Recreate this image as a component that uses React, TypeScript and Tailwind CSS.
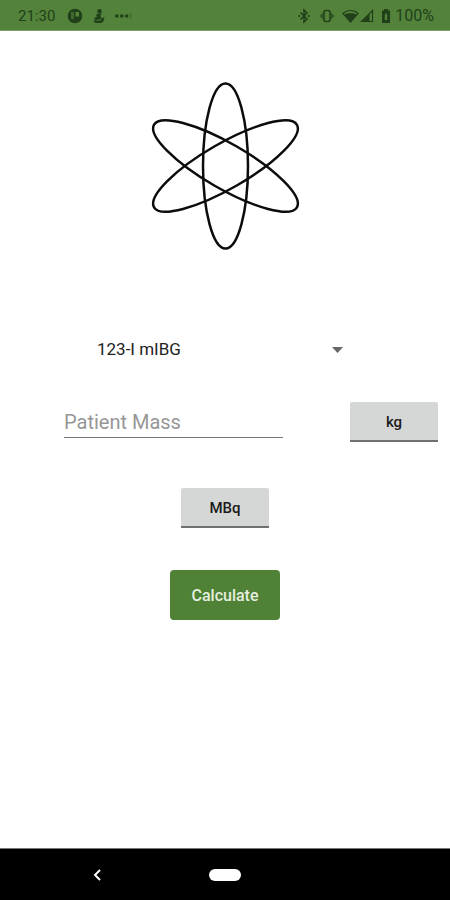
import { useState } from "react";

const TRACERS = ["123-I mIBG", "18F-FDG", "99mTc-MDP", "99mTc-DMSA", "99mTc-MAG3"];

function StatusBar() {
  return (
    <header className="flex h-[31px] items-center justify-between border-b border-[#7ba066] bg-[#53833b] pt-0.5 pr-4 pl-[18px] text-[#20401a]">
      <div className="flex items-center">
        <span className="text-[15px]">21:30</span>
        <svg className="ml-3" width="16" height="16" viewBox="0 0 16 16">
          <circle cx="8" cy="8" r="7.3" fill="currentColor" />
          <path d="M4 4h3v7H4z" fill="#53833b" opacity=".6" />
          <path d="M8.500 4h3.500v4.500H8.500z" fill="#53833b" />
        </svg>
        <svg className="ml-2" width="16" height="16" viewBox="0 0 16 16" fill="currentColor">
          <circle cx="8.5" cy="3.2" r="2.2" />
          <path d="M5 6.5 10.5 5 9.5 8l1 2.5 3-1.5-1 4.5L10 15H4.500L2 13l2.500-.8L3 10l3-1.200z" />
          <path d="M5.500 12.500 10 11.500" stroke="#53833b" strokeWidth="1" />
        </svg>
        <svg className="ml-[7px]" width="18" height="16" viewBox="0 0 18 16" fill="currentColor">
          <rect x="1" y="6.5" width="3.5" height="3" rx="1" />
          <rect x="6" y="6.5" width="3.5" height="3" rx="1" />
          <rect x="11" y="6.5" width="3.5" height="3" rx="1" />
          <path d="M16.5 5h1v6h-1z" opacity=".5" />
        </svg>
      </div>
      <div className="flex items-center">
        {/* bluetooth */}
        <svg width="12" height="16" viewBox="0 0 12 16" fill="none" stroke="currentColor" strokeWidth="1.5">
          <path d="M2.5 4.5 9 11l-3 3V2l3 3-6.5 6.5" />
          <path d="M.5 8H2M10 8h1.5" strokeWidth="1.8" />
        </svg>
        {/* vibrate */}
        <svg className="ml-[9px]" width="16" height="16" viewBox="0 0 16 16" fill="currentColor">
          <rect x="5" y="2.5" width="6" height="11" rx="2" fill="none" stroke="currentColor" strokeWidth="1.6" />
          <path d="M4 4.5v7L.5 8zM12 4.5v7L15.5 8z" opacity=".65" />
        </svg>
        {/* wifi */}
        <svg className="ml-[7px]" width="17" height="16" viewBox="0 0 17 16">
          <path d="M1 5.5C5 1.5 12 1.5 16 5.5L8.5 14z" fill="none" stroke="currentColor" strokeWidth="1.2" />
          <path d="M2.5 6.5c3-1.8 9-1.8 12 0l-6 7.5z" fill="currentColor" />
        </svg>
        {/* signal */}
        <svg className="ml-px" width="14" height="16" viewBox="0 0 14 16">
          <path d="M12.5 2.5v11h-11z" fill="none" stroke="currentColor" strokeWidth="1.2" />
          <path d="M9.5 5.5V14H1z" fill="currentColor" />
        </svg>
        {/* battery */}
        <svg className="ml-[7px]" width="10" height="16" viewBox="0 0 10 16">
          <path d="M3 1h4v1.5h2V15H1V2.5h2z" fill="currentColor" />
          <path d="M5 4.5 3.8 7.5V12h2.4V7.5z" fill="#53833b" />
        </svg>
        <span className="ml-1 text-base">100%</span>
      </div>
    </header>
  );
}

function AtomLogo() {
  return (
    <svg width="168" height="168" viewBox="0 0 168 168" fill="none" stroke="#0c0c0c" strokeWidth="2.5" role="img" aria-label="Atom">
      <ellipse cx="84.5" cy="84" rx="22.5" ry="82.5" />
      <ellipse cx="84.5" cy="84" rx="22.5" ry="82.5" transform="rotate(60 84.5 84)" />
      <ellipse cx="84.5" cy="84" rx="22.5" ry="82.5" transform="rotate(-60 84.5 84)" />
    </svg>
  );
}

function UnitToggle({ units }: { units: [string, string] }) {
  const [index, setIndex] = useState(0);

  return (
    <button
      type="button"
      onClick={() => setIndex(1 - index)}
      className="h-10 w-[88px] shrink-0 rounded-t-xs border-b-2 border-[#6f7070] bg-[#d5d7d6] pt-0.5 text-[15px] font-medium text-[#1c1c1c]"
    >
      {units[index]}
    </button>
  );
}

export default function App() {
  const [tracer, setTracer] = useState(TRACERS[0]);
  const [mass, setMass] = useState("");

  return (
    <div className="flex min-h-screen flex-col bg-white font-['Roboto',sans-serif]">
      <StatusBar />

      <main className="flex flex-1 flex-col items-center pt-[51px]">
        <AtomLogo />

        <form className="flex w-full flex-col items-center pt-20" onSubmit={(e) => e.preventDefault()}>
          <div className="relative w-64">
            <select
              aria-label="Radiopharmaceutical"
              value={tracer}
              onChange={(e) => setTracer(e.target.value)}
              className="h-10 w-full appearance-none bg-transparent text-[17px] text-[#222222] outline-none"
            >
              {TRACERS.map((name) => (
                <option key={name}>{name}</option>
              ))}
            </select>
            <svg className="pointer-events-none absolute top-[17px] right-[10px]" width="11" height="6" viewBox="0 0 11 6" fill="#666666">
              <path d="M0 0h11L5.5 6z" />
            </svg>
          </div>

          <div className="mt-8 flex w-full items-center gap-[67px] pr-3 pl-16">
            <input
              type="text"
              inputMode="decimal"
              aria-label="Patient Mass"
              placeholder="Patient Mass"
              value={mass}
              onChange={(e) => setMass(e.target.value)}
              className="h-8 min-w-0 flex-1 border-b border-[#777777] text-xl text-[#222222] outline-none placeholder:text-[#969696]"
            />
            <UnitToggle units={["kg", "lb"]} />
          </div>

          <div className="mt-[46px]">
            <UnitToggle units={["MBq", "mCi"]} />
          </div>

          <button type="submit" className="mt-[42px] h-[50px] w-[110px] rounded bg-[#4f8136] pt-0.5 text-base font-medium text-[#e6efdf]">
            Calculate
          </button>
        </form>
      </main>

      <nav className="grid h-[52px] grid-cols-[1fr_32px_1fr] items-center border-t border-[#777777] bg-black">
        <button type="button" aria-label="Back" className="flex h-full items-center pl-[93px]">
          <svg width="9" height="12" viewBox="0 0 9 12" fill="none" stroke="#ffffff" strokeWidth="2">
            <path d="M7 1 2 6l5 5" />
          </svg>
        </button>
        <button type="button" aria-label="Home" className="h-3 rounded-full bg-white" />
      </nav>
    </div>
  );
}
